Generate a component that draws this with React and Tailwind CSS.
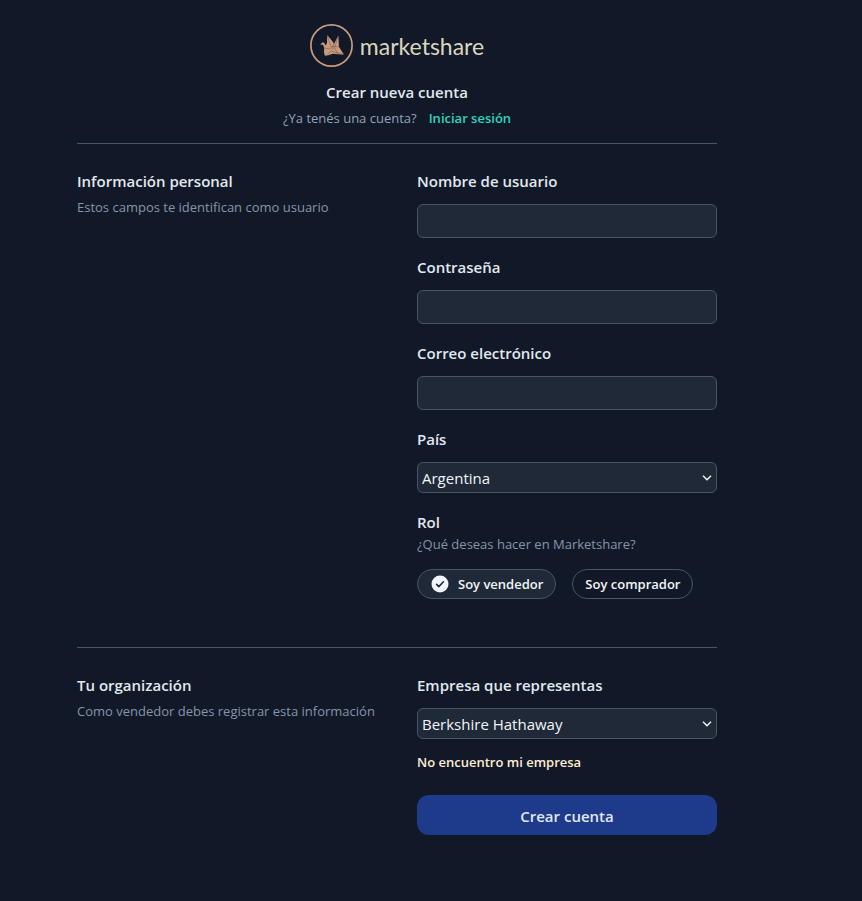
import { useState } from "react";

const fieldBox =
  "block w-full rounded-md border border-[#475569] bg-[#1f2937] text-[15px] text-slate-100 outline-none focus:border-slate-400";

function Logo() {
  return (
    <div className="flex items-center justify-center gap-[7px]">
      <svg viewBox="0 0 43 43" className="h-[43px] w-[43px]" aria-hidden="true">
        <circle cx="21.5" cy="21.5" r="20.6" fill="none" stroke="#c99b7c" strokeWidth="1.7" />
        <path
          d="M10 20.8 12.2 18.4 14 18.6 15.6 21.4 17 19 17.2 11 22.6 17.6 24 20 28.4 11.2 28.9 22.8 34 30.8 22.7 29.8 18.4 31.2 15 31.8 13.9 28.3 14.3 23.7 12.7 20.6Z"
          fill="#c99b7c"
        />
        <path
          d="M17.2 11 20.8 22.4M24 20 22 24 15.4 24.8M28.4 11.2 25 22.6 17.8 30.6M20.8 22.4 28.9 22.8M24.6 24 27.8 29.8M22 27.4 34 30.8"
          fill="none"
          stroke="#111827"
          strokeOpacity="0.55"
          strokeWidth="0.5"
        />
      </svg>
      <span className="font-[Lato,sans-serif] text-[23px] leading-7 text-[#dcd6bd]">marketshare</span>
    </div>
  );
}

function Field({ id, label, children }) {
  return (
    <div>
      <label htmlFor={id} className="mb-[10px] block text-[15px] leading-[26px] font-semibold">
        {label}
      </label>
      {children}
    </div>
  );
}

function SelectField({ id, label, options }) {
  return (
    <Field id={id} label={label}>
      <div className="relative">
        <select id={id} className={`${fieldBox} h-[31px] appearance-none pt-0.5 pr-6 pl-1`}>
          {options.map((option) => (
            <option key={option}>{option}</option>
          ))}
        </select>
        <svg
          viewBox="0 0 10 10"
          className="pointer-events-none absolute top-[11px] right-[5px] h-[10px] w-[10px]"
          aria-hidden="true"
        >
          <path d="m1 2.8 4 4 4-4" fill="none" stroke="#f1f5f9" strokeWidth="1.5" />
        </svg>
      </div>
    </Field>
  );
}

function Section({ title, description, children }) {
  return (
    <section className="grid grid-cols-1 gap-x-10 gap-y-6 border-t border-[#475569] pt-6 sm:grid-cols-[minmax(0,1fr)_300px]">
      <div>
        <h2 className="text-[15px] leading-[26px] font-semibold">{title}</h2>
        <p className="mt-1 text-[13px] leading-[18px] text-[#8795a9]">{description}</p>
      </div>
      <div>{children}</div>
    </section>
  );
}

function RoleOption({ value, label, checked, onSelect }) {
  return (
    <label
      className={`flex h-[30px] cursor-pointer items-center gap-2 rounded-full border border-[#475569] px-3 text-[13px] font-semibold text-slate-100 ${
        checked ? "bg-[#1f2937]" : ""
      }`}
    >
      <input
        type="radio"
        name="rol"
        value={value}
        checked={checked}
        onChange={() => onSelect(value)}
        className="sr-only"
      />
      {checked && (
        <svg viewBox="0 0 20 20" className="h-5 w-5" aria-hidden="true">
          <circle cx="10" cy="10" r="8.5" fill="#f0f6ff" />
          <path
            d="m6.6 10.4 2.2 2.2 4.6-4.8"
            fill="none"
            stroke="#1f2937"
            strokeWidth="1.6"
            strokeLinecap="round"
            strokeLinejoin="round"
          />
        </svg>
      )}
      <span className="pt-0.5">{label}</span>
    </label>
  );
}

export default function App() {
  const [role, setRole] = useState("vendedor");

  return (
    <div className="flex min-h-screen justify-center bg-[#111827] pr-[68px] pb-10 font-['Open_Sans',sans-serif] text-slate-200">
      <main className="w-full max-w-[640px] pt-6">
        <header className="pb-4 text-center">
          <Logo />
          <h1 className="mt-3 text-[15px] leading-[26px] font-semibold">Crear nueva cuenta</h1>
          <p className="mt-1 text-[13px] leading-[18px] font-medium text-[#94a3b8]">
            ¿Ya tenés una cuenta?
            <a href="#iniciar-sesion" className="ml-3 font-semibold text-[#2dd4bf]">
              Iniciar sesión
            </a>
          </p>
        </header>

        <form onSubmit={(event) => event.preventDefault()}>
          <Section title="Información personal" description="Estos campos te identifican como usuario">
            <div className="flex flex-col gap-4 pb-12">
              <Field id="usuario" label="Nombre de usuario">
                <input id="usuario" type="text" className={`${fieldBox} h-[34px] px-2`} />
              </Field>
              <Field id="clave" label="Contraseña">
                <input id="clave" type="password" className={`${fieldBox} h-[34px] px-2`} />
              </Field>
              <Field id="correo" label="Correo electrónico">
                <input id="correo" type="email" className={`${fieldBox} h-[34px] px-2`} />
              </Field>
              <SelectField id="pais" label="País" options={["Argentina", "Chile", "Uruguay"]} />
              <fieldset>
                <legend className="text-[15px] leading-[26px] font-semibold">Rol</legend>
                <p className="text-[13px] leading-[18px] text-[#8795a9]">¿Qué deseas hacer en Marketshare?</p>
                <div className="mt-4 flex gap-4">
                  <RoleOption
                    value="vendedor"
                    label="Soy vendedor"
                    checked={role === "vendedor"}
                    onSelect={setRole}
                  />
                  <RoleOption
                    value="comprador"
                    label="Soy comprador"
                    checked={role === "comprador"}
                    onSelect={setRole}
                  />
                </div>
              </fieldset>
            </div>
          </Section>

          <Section title="Tu organización" description="Como vendedor debes registrar esta información">
            <SelectField id="empresa" label="Empresa que representas" options={["Berkshire Hathaway"]} />
            <button type="button" className="mt-3 block text-[13px] leading-[22px] font-semibold text-[#ffedd5]">
              No encuentro mi empresa
            </button>
            <button
              type="submit"
              className="mt-[22px] block h-10 w-full rounded-xl bg-[#1e3a8a] pt-0.5 text-[15px] font-semibold text-slate-200"
            >
              Crear cuenta
            </button>
          </Section>
        </form>
      </main>
    </div>
  );
}
